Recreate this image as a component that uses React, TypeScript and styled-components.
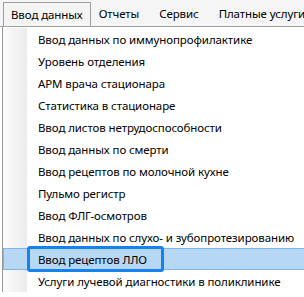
import React from 'react';
import styled, { createGlobalStyle, css } from 'styled-components';

const GlobalStyle = createGlobalStyle`
  html, body {
    margin: 0;
    padding: 0;
    background: #ffffff;
    overflow: hidden;
  }
  * {
    box-sizing: border-box;
  }
`;

const topMenu = ['Ввод данных', 'Отчеты', 'Сервис', 'Платные услуги'];

const items = [
  'Ввод данных по иммунопрофилактике',
  'Уровень отделения',
  'АРМ врача стационара',
  'Статистика в стационаре',
  'Ввод листов нетрудоспособности',
  'Ввод данных по смерти',
  'Ввод рецептов по молочной кухне',
  'Пульмо регистр',
  'Ввод ФЛГ-осмотров',
  'Ввод данных по слухо- и зубопротезированию',
  'Ввод рецептов ЛЛО',
  'Услуги лучевой диагностики в поликлинике',
];

const App = () => {
  return (
    <Screen>
      <GlobalStyle />
      <MenuBar>
        {topMenu.map((label, index) => (
          <MenuTab key={label} active={index === 0}>
            {label}
          </MenuTab>
        ))}
      </MenuBar>
      <Dropdown>
        {items.map((label) => {
          const selected = label === 'Ввод рецептов ЛЛО';
          return (
            <Item key={label} selected={selected}>
              <IconColumn selected={selected} />
              <ItemLabel selected={selected}>{label}</ItemLabel>
            </Item>
          );
        })}
      </Dropdown>
    </Screen>
  );
};

export default App;

const Screen = styled.div`
  width: 304px;
  height: 297px;
  overflow: hidden;
  background: #ffffff;
  font-family: 'Noto Sans', 'Open Sans', sans-serif;
  font-size: 11.5px;
  letter-spacing: -0.1px;
  color: #000000;
`;

const MenuBar = styled.div`
  display: flex;
  align-items: flex-end;
  height: 27px;
  padding-left: 3px;
  background: #f5f5f5;
  border-bottom: 1px solid #a0a0a0;
  white-space: nowrap;
  overflow: hidden;
`;

const MenuTab = styled.div<{ active: boolean }>`
  display: flex;
  align-items: center;
  height: 24px;
  padding-bottom: 2px;
  ${({ active }) =>
    active
      ? css`
          height: 25px;
          margin-bottom: -1px;
          padding: 0 7px 2px;
          margin-right: 8px;
          background: #f5f5f5;
          border: 1px solid #a0a0a0;
          border-bottom: none;
        `
      : css`
          margin-right: 20px;
        `}
`;

const Dropdown = styled.div`
  margin-left: 2px;
  border-left: 1px solid #979797;
  background: #ffffff;
  padding-top: 1px;
`;

const Item = styled.div<{ selected: boolean }>`
  position: relative;
  display: flex;
  align-items: center;
  height: 22px;
  white-space: nowrap;
  ${({ selected }) =>
    selected &&
    css`
      background: #b7d8f4;
      border-top: 1px solid #7fb6ea;
      border-bottom: 1px solid #7fb6ea;
      border-left: 1px solid #7fb6ea;
    `}
`;

const IconColumn = styled.div<{ selected: boolean }>`
  align-self: stretch;
  width: 24px;
  flex-shrink: 0;
  background: ${({ selected }) =>
    selected ? 'transparent' : 'linear-gradient(to right, #fbfbfb, #ececec)'};
`;

const ItemLabel = styled.span<{ selected: boolean }>`
  margin-left: 11px;
  ${({ selected }) =>
    selected &&
    css`
      margin-left: 10px;
      &::before {
        content: '';
        position: absolute;
        left: 23px;
        width: 131px;
        top: -3px;
        bottom: -3px;
        border: 3px solid #1682f0;
        border-radius: 3px;
      }
    `}
`;
